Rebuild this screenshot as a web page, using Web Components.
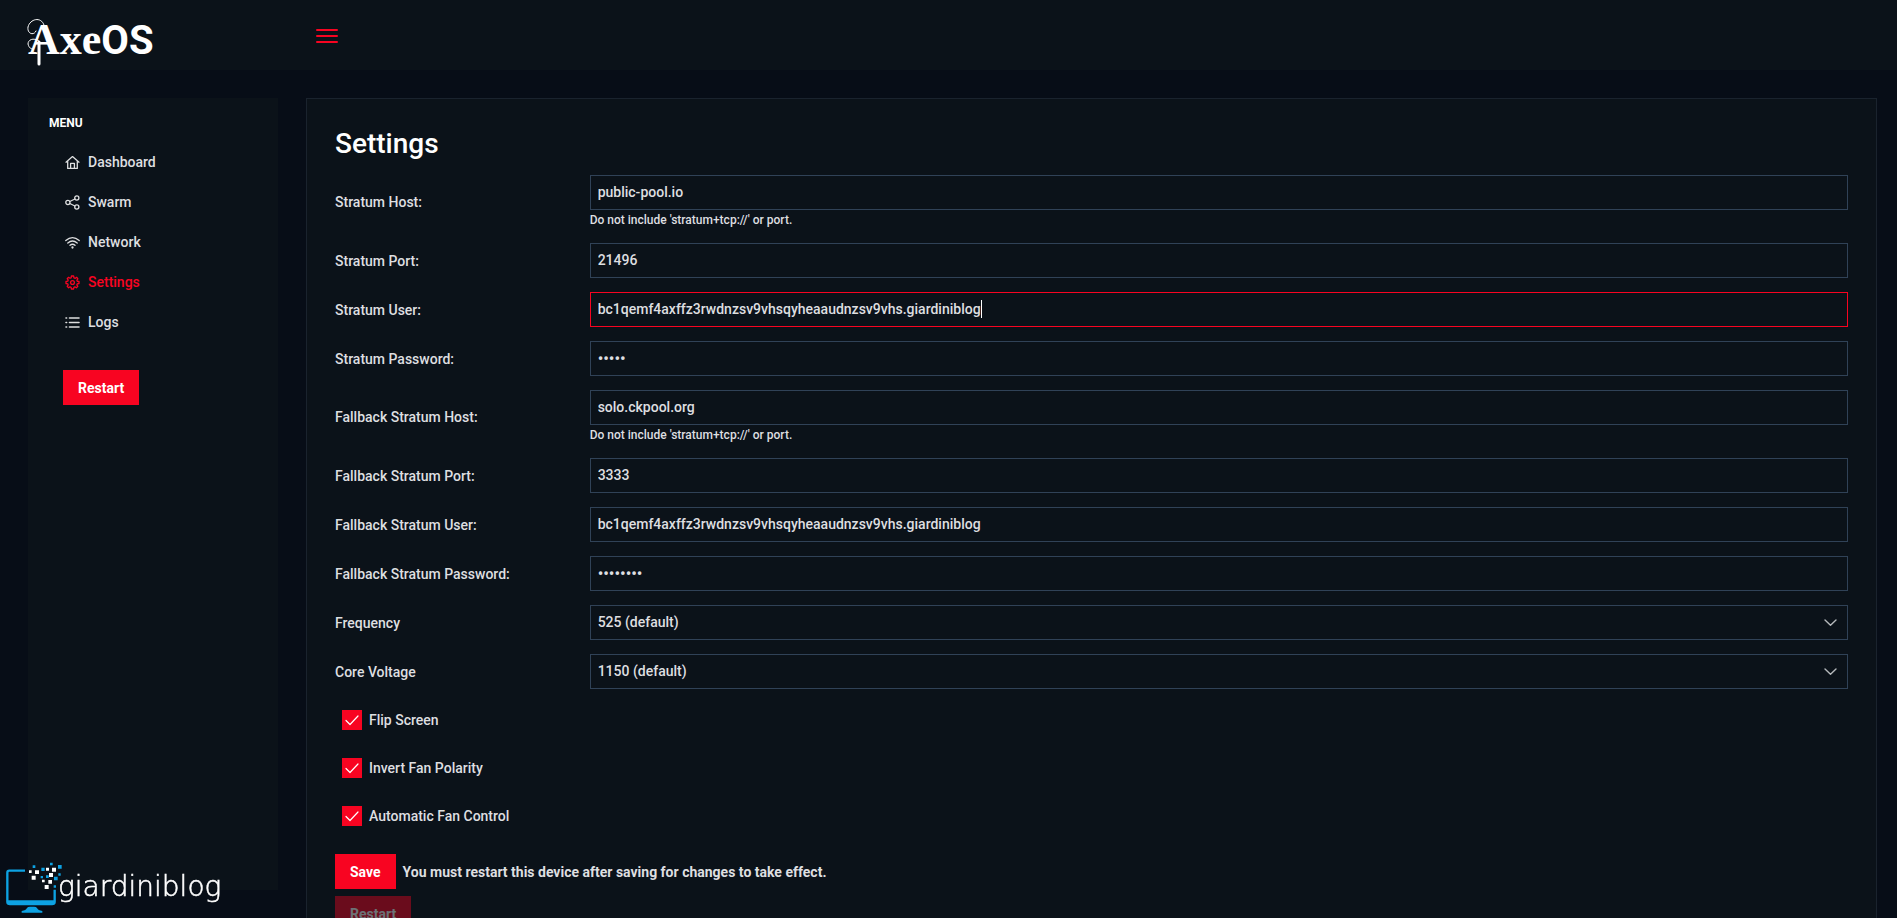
<!DOCTYPE html>
<html lang="en">
<head>
<meta charset="utf-8">
<title>AxeOS</title>
<style>
  :root {
    --ground: #070d17;
    --card: #0b1219;
    --card-line: #1a232e;
    --field-line: #304257;
    --primary: #f80421;
    --text: #dedfe0;
  }
  body {
    margin: 0;
    background: var(--ground);
    color: var(--text);
    font: 500 14px/18px Roboto, "Liberation Sans", sans-serif;
  }
</style>
</head>
<body>
<axe-app></axe-app>

<template id="t-app">
  <style>
    :host { display: block; min-height: 100vh; }
    .layout {
      display: grid;
      grid-template-columns: 250px minmax(0, 1fr);
      align-items: start;
      gap: 28px;
      padding: 28px 20px 28px 28px;
    }
    axe-menu { position: sticky; top: 98px; }
    axe-watermark { position: fixed; left: 0; bottom: 0; }
  </style>
  <axe-topbar></axe-topbar>
  <div class="layout">
    <axe-menu></axe-menu>
    <axe-settings></axe-settings>
  </div>
  <axe-watermark></axe-watermark>
</template>

<template id="t-topbar">
  <style>
    :host {
      display: flex;
      align-items: center;
      height: 70px;
      padding: 1px 28px 0 24px;
      box-sizing: border-box;
      background: var(--card);
      position: sticky;
      top: 0;
      z-index: 2;
    }
    a { display: block; width: 289px; height: 60px; }
    a svg { display: block; }
    .axe { font: 700 44px "Liberation Serif", serif; }
    .os { font: 700 40px Roboto, sans-serif; }
    button {
      border: 0;
      padding: 3px;
      background: none;
      color: var(--primary);
      cursor: pointer;
    }
    button svg { display: block; }
  </style>
  <a href="#" aria-label="AxeOS">
    <svg width="132" height="60" viewBox="0 0 132 60" fill="#fff">
      <text x="4" y="48" class="axe">Axe<tspan class="os">OS</tspan></text>
      <g fill="none" stroke="#fff" stroke-linecap="round">
        <path d="M20 19C17 10 6 13 4 21C3 28 10 30 12 25" stroke-width="1"/>
        <path d="M15 35C9 31 4 34 4 38C5 42 7 43 9 43" stroke-width="1"/>
        <path d="M15 36V58" stroke-width="3"/>
      </g>
    </svg>
  </a>
  <button type="button" aria-label="Toggle menu">
    <svg width="22" height="16" viewBox="0 0 22 16" stroke="currentColor" stroke-width="2" stroke-linecap="round"><path d="M1 2H21M1 8H21M1 14H21"/></svg>
  </button>
</template>

<template id="t-menu">
  <style>
    :host {
      display: block;
      box-sizing: border-box;
      height: calc(100vh - 126px);
      padding: 7px 21px;
      background: var(--card);
    }
    h2 {
      margin: 0;
      color: #fff;
      font-size: 12px;
      font-weight: 700;
      line-height: 37px;
    }
    ul { list-style: none; margin: 0 0 28px; padding: 0; }
    axe-button { margin-left: 14px; }
  </style>
  <h2>MENU</h2>
  <nav>
    <ul>
      <li><axe-menu-item icon="home">Dashboard</axe-menu-item></li>
      <li><axe-menu-item icon="share">Swarm</axe-menu-item></li>
      <li><axe-menu-item icon="wifi">Network</axe-menu-item></li>
      <li><axe-menu-item icon="cog" active>Settings</axe-menu-item></li>
      <li><axe-menu-item icon="list">Logs</axe-menu-item></li>
    </ul>
  </nav>
  <axe-button>Restart</axe-button>
</template>

<template id="t-menu-item">
  <style>
    :host { display: block; }
    a {
      display: flex;
      align-items: center;
      gap: 8px;
      height: 40px;
      padding: 0 16px;
      color: inherit;
      text-decoration: none;
    }
    :host([active]) a { color: var(--primary); }
    svg { width: 15px; height: 15px; flex: none; }
  </style>
  <a href="#"><svg viewBox="0 0 15 15" fill="none" stroke="currentColor" stroke-width="1.3" stroke-linecap="round" stroke-linejoin="round"></svg><slot></slot></a>
</template>

<template id="t-button">
  <style>
    :host { display: inline-block; vertical-align: top; }
    button {
      display: block;
      height: 35px;
      padding: 0 15px;
      border: 0;
      background: var(--primary);
      color: #fff;
      font: inherit;
      font-weight: 700;
      cursor: pointer;
    }
    button:disabled { opacity: .4; cursor: default; }
  </style>
  <button type="button"><slot></slot></button>
</template>

<template id="t-field">
  <style>
    :host {
      display: grid;
      grid-template-columns: minmax(0, 1fr) minmax(0, 5fr);
      align-items: center;
      gap: 3px;
      margin-bottom: 14px;
    }
    .box { position: relative; }
    input, select {
      display: block;
      box-sizing: border-box;
      width: 100%;
      height: 35px;
      margin: 0;
      padding: 0 7px 1px;
      border: 1px solid var(--field-line);
      border-radius: 0;
      outline: 0;
      appearance: none;
      background: var(--card);
      color: inherit;
      font: inherit;
      caret-color: transparent;
    }
    input[type="password"] { font-size: 16px; }
    input:focus, select:focus { border-color: var(--primary); }
    .box svg { position: absolute; right: 11px; top: 11px; pointer-events: none; }
    .caret {
      position: absolute;
      top: 8px;
      width: 1px;
      height: 18px;
      background: #fff;
      pointer-events: none;
    }
    input:not(:focus) + .caret { display: none; }
    small { display: block; padding-top: 1px; font-size: 12px; line-height: 18px; }
  </style>
  <label for="control"></label>
  <div class="control"><div class="box"></div></div>
</template>

<template id="t-check">
  <style>
    :host { display: block; margin-bottom: 14px; padding: 7px; }
    label { display: flex; width: fit-content; align-items: center; gap: 7px; }
    .box { position: relative; display: block; width: 20px; height: 20px; }
    input {
      display: block;
      width: 20px;
      height: 20px;
      margin: 0;
      appearance: none;
      border: 1px solid var(--field-line);
      box-sizing: border-box;
    }
    input:checked { background: var(--primary); border-color: var(--primary); }
    svg { position: absolute; inset: 0; pointer-events: none; }
    input:not(:checked) + svg { display: none; }
  </style>
  <label>
    <span class="box">
      <input type="checkbox" checked>
      <svg width="20" height="20" viewBox="0 0 20 20" fill="none" stroke="#fff" stroke-width="1.2" stroke-linecap="round" stroke-linejoin="round"><path d="M4 10.5L8 14.5L16 6"/></svg>
    </span>
    <slot></slot>
  </label>
</template>

<template id="t-settings">
  <style>
    :host {
      display: block;
      padding: 28px;
      border: 1px solid var(--card-line);
      background: var(--card);
    }
    h1 {
      margin: 0 0 14px;
      color: #fff;
      font-size: 28px;
      font-weight: 500;
      line-height: 34px;
    }
    .save { display: flex; align-items: center; gap: 7px; margin: 21px 0 7px; }
  </style>
  <h1>Settings</h1>
  <form>
    <axe-field label="Stratum Host:" value="public-pool.io" hint="Do not include 'stratum+tcp://' or port."></axe-field>
    <axe-field label="Stratum Port:" value="21496"></axe-field>
    <axe-field label="Stratum User:" value="bc1qemf4axffz3rwdnzsv9vhsqyheaaudnzsv9vhs.giardiniblog" focused></axe-field>
    <axe-field label="Stratum Password:" type="password" value="abcde"></axe-field>
    <axe-field label="Fallback Stratum Host:" value="solo.ckpool.org" hint="Do not include 'stratum+tcp://' or port."></axe-field>
    <axe-field label="Fallback Stratum Port:" value="3333"></axe-field>
    <axe-field label="Fallback Stratum User:" value="bc1qemf4axffz3rwdnzsv9vhsqyheaaudnzsv9vhs.giardiniblog"></axe-field>
    <axe-field label="Fallback Stratum Password:" type="password" value="abcdefgh"></axe-field>
    <axe-field label="Frequency" type="select" value="525 (default)"></axe-field>
    <axe-field label="Core Voltage" type="select" value="1150 (default)"></axe-field>
    <axe-check>Flip Screen</axe-check>
    <axe-check>Invert Fan Polarity</axe-check>
    <axe-check>Automatic Fan Control</axe-check>
    <div class="save"><axe-button>Save</axe-button><b>You must restart this device after saving for changes to take effect.</b></div>
    <axe-button disabled>Restart</axe-button>
  </form>
</template>

<template id="t-watermark">
  <style>
    :host { display: block; pointer-events: none; z-index: 3; }
    svg { display: block; }
    text { font: 200 28px "DejaVu Sans", sans-serif; }
  </style>
  <svg width="230" height="63" viewBox="0 0 230 63">
    <g transform="scale(.33333)">
      <path d="M75 47H28Q22 47 22 53V140Q22 146 28 146H158Q164 146 164 140V104" fill="none" stroke="#0da2e3" stroke-width="7"/>
      <path d="M22 136H164V144Q164 151 157 151H29Q22 151 22 144Z" fill="#0da2e3"/>
      <path d="M65 173V168Q78 166 81 159Q83 155 90 155H102Q109 155 111 159Q114 166 127 168V173Z" fill="#0da2e3"/>
      <path fill="#0da2e3" d="M98 31h8v8h-8zM124 38h10v10h-10zM150 23h8v8h-8zM174 30h11v11h-11zM122 63h7v7h-7zM138 61h8v8h-8zM162 65h11v11h-11zM175 55h7v7h-7zM161 91h7v7h-7z"/>
      <path fill="#fff" d="M87 46h8v8h-8zM105 46h12v11h-12zM95 62h12v12h-12zM138 38h9v9h-9zM156 38h12v12h-12zM147 54h12v12h-12zM126 74h8v8h-8zM145 75h11v11h-11zM134 90h12v12h-12z"/>
    </g>
    <text x="58" y="41" fill="#fff" stroke="#fff" stroke-width=".5">giardiniblog</text>
  </svg>
</template>

<script>
  const icons = {
    home: '<path d="M1 7.2L7.5 1.6L14 7.2M2.7 6V13.4H12.3V6M5.6 13.2V8.4H9.4V13.2"/>',
    share: '<circle cx="2.9" cy="7.5" r="2.1"/><circle cx="11.8" cy="3" r="2.1"/><circle cx="11.8" cy="12" r="2.1"/><path d="M4.8 6.5L9.9 4M4.8 8.5L9.9 11"/>',
    wifi: '<path d="M.8 5.6Q7.5 -.4 14.2 5.6M2.8 8Q7.5 4 12.2 8M5 10.3Q7.5 8.2 10 10.3"/><circle cx="7.5" cy="12.5" r=".5" fill="currentColor"/>',
    cog: '<circle cx="7.5" cy="7.5" r="1.9"/><path d="M6.4 1H8.6L9 2.8L10.3 3.3L11.8 2.3L12.9 3.9L11.9 5.2L12.3 6.3L14 6.5V8.5L12.3 8.8L11.8 9.9L12.8 11.4L11.4 12.8L9.9 11.8L8.9 12.3L8.6 14H6.4L6.1 12.3L5 11.8L3.6 12.8L2.2 11.4L3.2 9.9L2.7 8.8L1 8.5V6.5L2.7 6.2L3.2 5.1L2.2 3.7L3.6 2.3L5 3.2L6.1 2.8Z"/>',
    list: '<path d="M4.5 3H14M4.5 7.5H14M4.5 12H14" stroke-width="1.6"/><path d="M1 3H1.6M1 7.5H1.6M1 12H1.6" stroke-width="1.6"/>'
  };
  const chevron = '<svg width="13" height="13" viewBox="0 0 13 13" fill="none" stroke="#b5b8bb" stroke-width="1.4" stroke-linecap="round" stroke-linejoin="round"><path d="M1 4L6.5 9.3L12 4"/></svg>';

  class AxeElement extends HTMLElement {
    constructor() {
      super();
      const name = this.localName.replace('axe-', 't-');
      this.attachShadow({ mode: 'open' })
        .append(document.getElementById(name).content.cloneNode(true));
    }
  }
  class AxeMenuItem extends AxeElement {
    connectedCallback() {
      this.shadowRoot.querySelector('svg').innerHTML = icons[this.getAttribute('icon')];
    }
  }
  class AxeButton extends AxeElement {
    connectedCallback() {
      this.shadowRoot.querySelector('button').disabled = this.hasAttribute('disabled');
    }
  }
  class AxeField extends AxeElement {
    connectedCallback() {
      const root = this.shadowRoot;
      const type = this.getAttribute('type') || 'text';
      const box = root.querySelector('.box');
      root.querySelector('label').textContent = this.getAttribute('label');
      const control = document.createElement(type === 'select' ? 'select' : 'input');
      control.id = 'control';
      box.append(control);
      if (type === 'select') {
        control.append(new Option(this.getAttribute('value')));
        box.insertAdjacentHTML('beforeend', chevron);
      } else {
        control.type = type;
        control.autocomplete = 'off';
        control.spellcheck = false;
        control.value = this.getAttribute('value');
        this.addCaret(box, control);
      }
      if (this.hasAttribute('hint')) {
        const hint = document.createElement('small');
        hint.textContent = this.getAttribute('hint');
        box.after(hint);
      }
      if (this.hasAttribute('focused')) {
        control.focus({ preventScroll: true });
        control.setSelectionRange(control.value.length, control.value.length);
      }
    }
    // A steady caret, placed after the text that precedes the insertion point.
    addCaret(box, input) {
      const caret = document.createElement('span');
      caret.className = 'caret';
      box.append(caret);
      const pen = document.createElement('canvas').getContext('2d');
      const place = () => {
        const style = getComputedStyle(input);
        pen.font = `${style.fontWeight} ${style.fontSize} ${style.fontFamily}`;
        const text = input.type === 'password' ? '•'.repeat(input.value.length) : input.value;
        const width = pen.measureText(text.slice(0, input.selectionEnd)).width;
        caret.style.left = Math.round(width) + 8 + 'px';
      };
      for (const name of ['input', 'focus', 'keyup', 'click', 'select']) input.addEventListener(name, place);
      place();
    }
  }
  customElements.define('axe-button', AxeButton);
  customElements.define('axe-field', AxeField);
  customElements.define('axe-check', class extends AxeElement {});
  customElements.define('axe-menu-item', AxeMenuItem);
  customElements.define('axe-topbar', class extends AxeElement {});
  customElements.define('axe-menu', class extends AxeElement {});
  customElements.define('axe-settings', class extends AxeElement {});
  customElements.define('axe-watermark', class extends AxeElement {});
  customElements.define('axe-app', class extends AxeElement {});
</script>
</body>
</html>
